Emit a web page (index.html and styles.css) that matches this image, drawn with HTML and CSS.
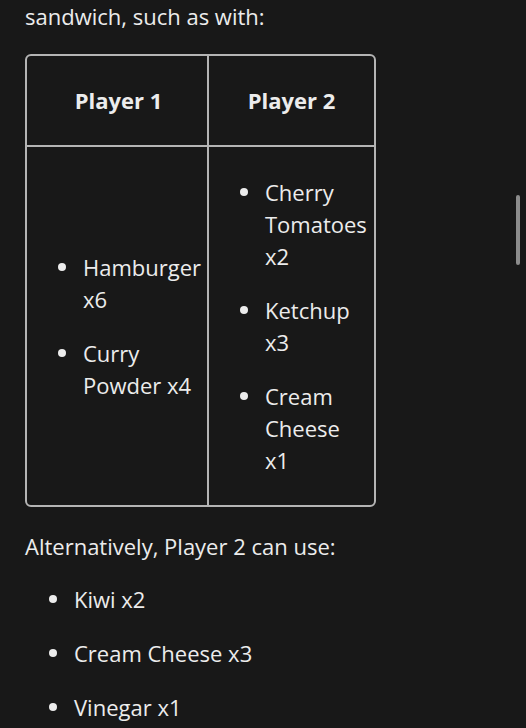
FILE: index.html
```html
<!DOCTYPE html>
<html lang="en">
<head>
<meta charset="utf-8">
<link rel="stylesheet" href="styles.css">
</head>
<body>
<div class="content">
  <p class="para">sandwich, such as with:</p>
  <div class="table-wrap">
    <table class="grid">
      <thead>
        <tr><th class="c1">Player 1</th><th class="c2">Player 2</th></tr>
      </thead>
      <tbody>
        <tr>
          <td class="c1">
            <ul class="list">
              <li>Hamburger x6</li>
              <li>Curry Powder x4</li>
            </ul>
          </td>
          <td class="c2">
            <ul class="list">
              <li>Cherry Tomatoes x2</li>
              <li>Ketchup x3</li>
              <li>Cream Cheese x1</li>
            </ul>
          </td>
        </tr>
      </tbody>
    </table>
  </div>
  <p class="para alt">Alternatively, Player 2 can use:</p>
  <ul class="list outer">
    <li>Kiwi x2</li>
    <li>Cream Cheese x3</li>
    <li>Vinegar x1</li>
  </ul>
</div>
<div class="scrollbar"></div>
</body>
</html>
```
FILE: styles.css
```css
html, body {
  margin: 0;
  padding: 0;
  background: #181818;
  overflow: hidden;
}
body {
  font-family: "Open Sans", "Noto Sans", sans-serif;
  font-size: 22px;
  line-height: 32px;
  color: #ececec;
}
.content {
  padding: 0 25px;
}
.para {
  margin: 0;
}
.alt {
  margin-top: 23px;
}
.table-wrap {
  margin-top: 22px;
  width: 347px;
  border: 2px solid #b4b4b4;
  border-radius: 6px;
  overflow: hidden;
}
.grid {
  border-collapse: collapse;
  width: 100%;
}
.grid th, .grid td {
  padding: 0 4px 0 7px;
  vertical-align: middle;
}
.grid .c2 {
  padding-right: 7px;
}
.grid th {
  height: 90px;
  box-sizing: border-box;
  padding-bottom: 2px;
  font-weight: 700;
  text-align: center;
  border-bottom: 2px solid #b4b4b4;
}
.grid td {
  height: 358px;
}
.grid .c1 {
  width: 169px;
  border-right: 2px solid #b4b4b4;
}
.list {
  margin: 0;
  padding-left: 49px;
  list-style: none;
}
.list li {
  position: relative;
}
.list li::before {
  content: "";
  position: absolute;
  left: -25px;
  top: 12px;
  width: 8px;
  height: 8px;
  border-radius: 50%;
  background: #ececec;
}
.list li + li {
  margin-top: 22px;
}
.outer {
  margin-top: 21px;
}
.scrollbar {
  position: fixed;
  left: 516px;
  top: 195px;
  width: 4px;
  height: 70px;
  border-radius: 2px;
  background: #8c8c8c;
}
```
